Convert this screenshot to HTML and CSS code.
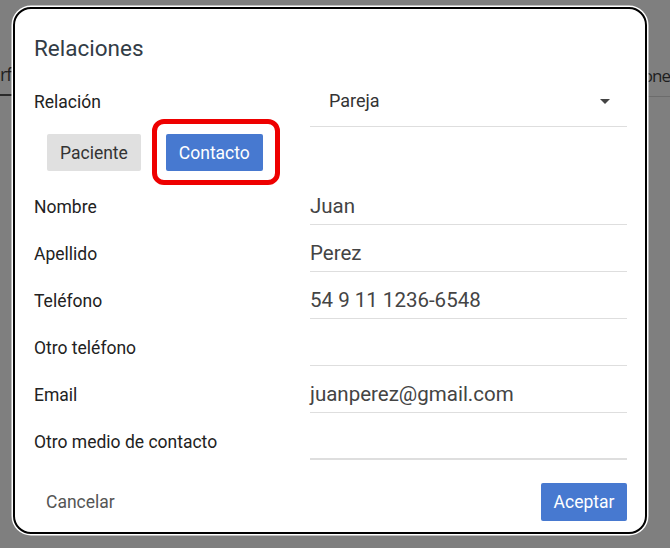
FILE: index.html
```html
<!DOCTYPE html>
<html lang="es">

<head>
    <meta charset="UTF-8">
    <meta name="viewport" content="width=device-width, initial-scale=1.0">
    <title>Relaciones</title>
    <link rel="stylesheet" href="styles.css">
</head>

<body>
    <div class="backdrop">
        <div class="tabs">
            <span class="tab tab-left">rf</span>
            <span class="tab tab-right">one</span>
        </div>
    </div>

    <div class="dialog">
        <h2 class="dialog-title">Relaciones</h2>

        <div class="row row-select">
            <span class="label">Relación</span>
            <div class="field select">
                <span class="value">Pareja</span>
                <span class="caret"></span>
            </div>
        </div>

        <div class="toggle">
            <button class="btn btn-gray">Paciente</button>
            <span class="highlight">
                <button class="btn btn-blue">Contacto</button>
            </span>
        </div>

        <div class="rows">
            <div class="row">
                <span class="label">Nombre</span>
                <div class="field"><span class="value">Juan</span></div>
            </div>
            <div class="row">
                <span class="label">Apellido</span>
                <div class="field"><span class="value">Perez</span></div>
            </div>
            <div class="row">
                <span class="label">Teléfono</span>
                <div class="field"><span class="value">54 9 11 1236-6548</span></div>
            </div>
            <div class="row">
                <span class="label">Otro teléfono</span>
                <div class="field"><span class="value"></span></div>
            </div>
            <div class="row">
                <span class="label">Email</span>
                <div class="field"><span class="value">juanperez@gmail.com</span></div>
            </div>
            <div class="row">
                <span class="label">Otro medio de contacto</span>
                <div class="field last"><span class="value"></span></div>
            </div>
        </div>

        <div class="actions">
            <button class="btn-text">Cancelar</button>
            <button class="btn btn-blue btn-accept">Aceptar</button>
        </div>
    </div>
</body>

</html>
```

FILE: styles.css
```css
body {
    margin: 0;
    height: 548px;
    background-color: #7f7f7f;
    font-family: Roboto, "Liberation Sans", sans-serif;
    overflow: hidden;
}
.backdrop {
    padding-top: 62px;
}
.tabs {
    display: flex;
    justify-content: space-between;
    font-family: "Open Sans", "Liberation Sans", sans-serif;
    font-size: 18px;
    color: #1e1e1e;
}
.tab {
    height: 24px;
    padding-bottom: 8px;
    line-height: 24px;
}
.tab-left {
    width: 12px;
    border-bottom: 2px solid #2a2a2a;
    letter-spacing: -1px;
}
.tab-right {
    width: 29px;
    margin-top: 2px;
    border-bottom: 1px solid #6c6c6c;
    font-size: 17px;
    text-align: right;
    letter-spacing: -1px;
    white-space: nowrap;
}
.dialog {
    position: absolute;
    left: 13px;
    top: 7px;
    width: 634px;
    height: 527px;
    box-sizing: border-box;
    background-color: #fff;
    border: 2px solid #000;
    border-radius: 18px;
    box-shadow: 0 0 0 1.5px #fff;
    padding: 26px 18px 0 19px;
    display: flex;
    flex-direction: column;
}
.dialog-title {
    margin: 0;
    font-size: 22.5px;
    font-weight: 400;
    line-height: 26px;
    color: #323c46;
}
.row {
    display: grid;
    grid-template-columns: 276px 1fr;
    align-items: end;
    height: 47px;
}
.row-select {
    height: 49px;
    margin-top: 17px;
    align-items: center;
}
.label {
    font-size: 17.5px;
    line-height: 20px;
    color: #222;
    padding-bottom: 8px;
}
.row-select .label {
    padding-bottom: 2px;
}
.field {
    height: 100%;
    box-sizing: border-box;
    border-bottom: 1px solid #dedede;
    display: flex;
    align-items: flex-end;
    padding-bottom: 6px;
}
.field.last {
    border-bottom-width: 2px;
}
.value {
    font-size: 20.5px;
    line-height: 24px;
    color: #444;
}
.select {
    justify-content: space-between;
    align-items: center;
    padding: 0 17px 2px 19px;
}
.select .value {
    font-size: 18px;
    color: #333;
}
.caret {
    width: 0;
    height: 0;
    border-left: 5px solid transparent;
    border-right: 5px solid transparent;
    border-top: 5px solid #444;
}
.toggle {
    display: flex;
    gap: 25px;
    padding: 7px 0 0 13px;
    height: 44px;
}
.btn {
    font-family: inherit;
    font-size: 17.5px;
    height: 37px;
    padding: 0 13px;
    border: none;
    border-radius: 2px;
    cursor: pointer;
}
.btn-gray {
    background-color: #e0e0e0;
    color: #333;
}
.btn-blue {
    background-color: #4779d0;
    color: #fff;
}
.highlight {
    position: relative;
    display: flex;
    height: 37px;
}
.highlight::after {
    content: "";
    position: absolute;
    left: -14px;
    top: -15px;
    right: -17px;
    bottom: -14px;
    border: 5px solid #ee0000;
    border-radius: 12px;
}
.actions {
    display: flex;
    justify-content: space-between;
    align-items: center;
    margin-top: 23px;
}
.btn-text {
    font-family: inherit;
    font-size: 17.5px;
    color: #555;
    background: none;
    border: none;
    padding: 0 12px;
    cursor: pointer;
}
.btn-accept {
    height: 38px;
    width: 86px;
    padding: 0;
}
```
